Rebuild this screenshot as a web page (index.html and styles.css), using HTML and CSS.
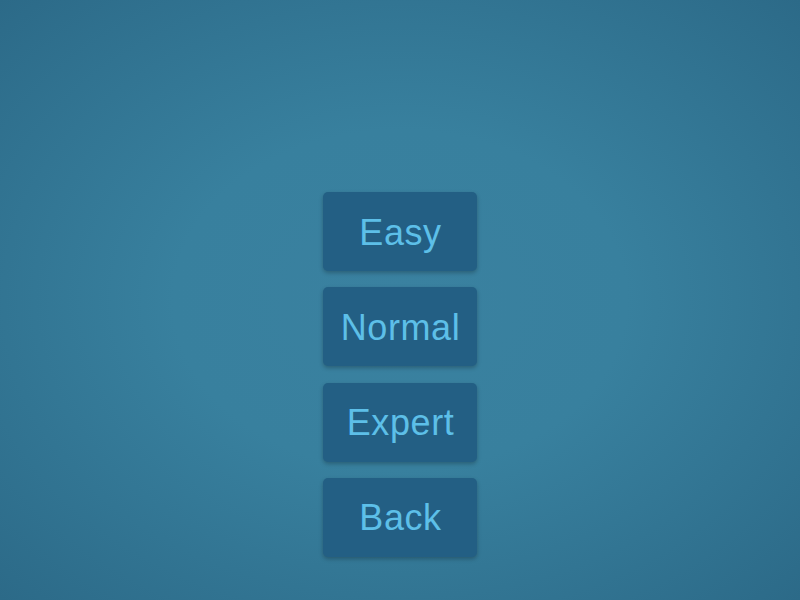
FILE: index.html
```html
<!DOCTYPE html>
<html>
<head>
<meta charset="utf-8">
<link rel="stylesheet" href="styles.css">
</head>
<body>
<div class="menu">
  <button class="btn">Easy</button>
  <button class="btn">Normal</button>
  <button class="btn">Expert</button>
  <button class="btn">Back</button>
</div>
</body>
</html>
```
FILE: styles.css
```css
html, body {
  margin: 0;
  padding: 0;
  width: 800px;
  height: 600px;
  overflow: hidden;
}
body {
  background: radial-gradient(ellipse at 50% 50%, #3a81a0 0%, #38809e 40%, #2c6a88 100%);
  font-family: "Liberation Sans", Arial, sans-serif;
}
.menu {
  display: flex;
  flex-direction: column;
  align-items: center;
  gap: 16.33px;
  padding-top: 192px;
}
.btn {
  width: 154px;
  height: 79px;
  border: none;
  border-radius: 5px;
  background: #235f84;
  color: #5dbfe8;
  font-family: "Liberation Sans", Arial, sans-serif;
  font-size: 36px;
  letter-spacing: 0.6px;
  padding: 2px 0 0 1px;
  box-shadow: 0 2px 4px rgba(0, 0, 0, 0.25);
}
```
